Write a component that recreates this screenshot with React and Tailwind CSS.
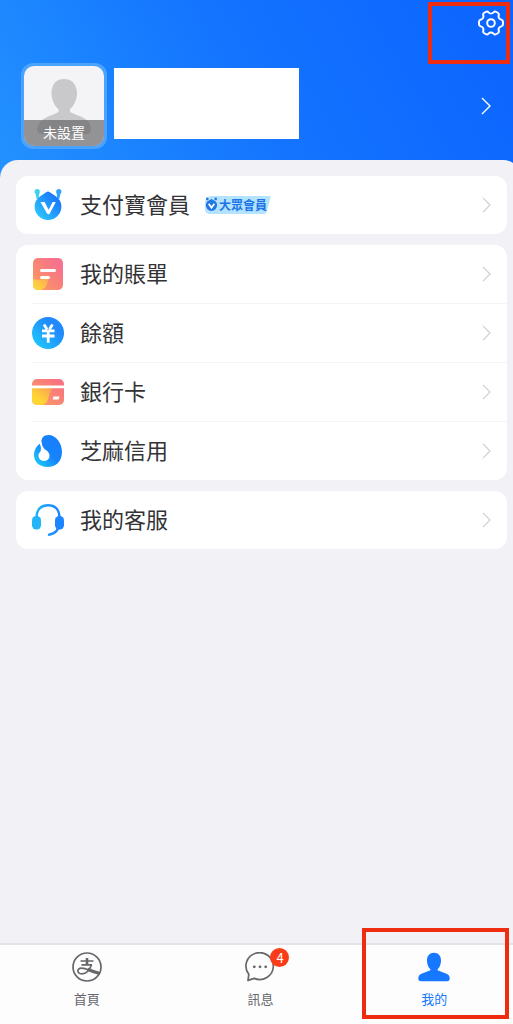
import React from 'react';

const Chevron = ({ className }) => (
  <svg viewBox="0 0 10 18" fill="none" stroke="currentColor" strokeWidth="1.4" className={className} aria-hidden="true">
    <path d="M1 1l8 8-8 8" />
  </svg>
);

const GearIcon = () => (
  <svg viewBox="0 0 28 28" fill="none" stroke="currentColor" strokeWidth="2.1" strokeLinejoin="round" className="size-[26px]" aria-hidden="true">
    <path d="M8.6 1.9C10 1.2 10.6 1.8 11.3 2.6C12.8 4.1 15.2 4.1 16.7 2.6C17.4 1.8 18 1.2 19.4 1.9L21.6 3.2C22.8 4 22.6 4.8 22.3 5.8C21.7 7.9 22.9 9.9 25 10.4C26.1 10.7 26.9 11.1 26.9 12.6V15.4C26.9 16.9 26.1 17.3 25 17.6C22.9 18.1 21.7 20.1 22.3 22.2C22.6 23.2 22.8 24 21.6 24.8L19.4 26.1C18 26.8 17.4 26.2 16.7 25.4C15.2 23.9 12.8 23.9 11.3 25.4C10.6 26.2 10 26.8 8.6 26.1L6.4 24.8C5.2 24 5.4 23.2 5.7 22.2C6.3 20.1 5.1 18.1 3 17.6C1.9 17.3 1.1 16.9 1.1 15.4V12.6C1.1 11.1 1.9 10.7 3 10.4C5.1 9.9 6.3 7.9 5.7 5.8C5.4 4.8 5.2 4 6.4 3.2Z" />
    <circle cx="14" cy="14" r="4.1" />
  </svg>
);

const MemberIcon = () => (
  <svg viewBox="0 0 32 32" className="size-8" aria-hidden="true">
    <defs>
      <linearGradient id="member" x1="1" y1="0" x2="0" y2="1">
        <stop offset="0.25" stopColor="#1c7dff" />
        <stop offset="1" stopColor="#2fd3fb" />
      </linearGradient>
    </defs>
    <circle cx="5.2" cy="2.6" r="2.6" fill="#3fd0f2" />
    <path d="M3.400 4l4-1-.6 6-2 1.500z" fill="#3fd0f2" />
    <circle cx="26.800" cy="2.600" r="2.600" fill="#2fa4fa" />
    <path d="M28.600 4l-4-1 .6 6 2 1.500z" fill="#2fa4fa" />
    <path d="M14.200 3.200Q16 1.700 17.800 3.200L23.800 7.200Q29.400 11.200 29.400 17.600A13.400 13.400 0 0 1 2.600 17.600Q2.600 11.200 8.200 7.200Z" fill="url(#member)" />
    <path d="M8.400 13h4.200l4 7.800 4-7.800h3.200l-6 11.600q-1.200 1.600-2.800 0z" fill="#fff" />
  </svg>
);

const BillIcon = () => (
  <svg viewBox="0 0 32 32" className="size-8" aria-hidden="true">
    <defs>
      <linearGradient id="bill" x1="1" y1="0" x2="0" y2="1">
        <stop offset="0.2" stopColor="#f6728d" />
        <stop offset="1" stopColor="#fd9f57" />
      </linearGradient>
      <linearGradient id="billFold" x1="1" y1="0" x2="0" y2="1">
        <stop offset="0" stopColor="#fda65c" />
        <stop offset="0.7" stopColor="#ffd13e" />
      </linearGradient>
      <clipPath id="billClip">
        <rect x="1" y="0" width="30" height="32" rx="5" />
      </clipPath>
    </defs>
    <g clipPath="url(#billClip)">
      <rect x="1" width="30" height="32" fill="url(#bill)" />
      <path d="M1 21q8 2 15-1Q16.500 30 7 33H0z" fill="url(#billFold)" />
    </g>
    <path d="M9.500 12.500h13M9.500 19.500h7" stroke="#fff" strokeWidth="3" strokeLinecap="round" />
  </svg>
);

const BalanceIcon = () => (
  <svg viewBox="0 0 32 32" className="size-8" aria-hidden="true">
    <defs>
      <linearGradient id="balance" x1="1" y1="0" x2="0" y2="1">
        <stop offset="0.3" stopColor="#2089fb" />
        <stop offset="1" stopColor="#1fd2fc" />
      </linearGradient>
    </defs>
    <circle cx="16" cy="16" r="16" fill="url(#balance)" />
    <path d="M12 7.500l3 4.800M20.500 7.500l-3 4.800M10 13.800h12.500M10 19h12.500M16.200 13v12.800" fill="none" stroke="#fff" strokeWidth="2.800" />
  </svg>
);

const CardIcon = () => (
  <svg viewBox="0 0 32 32" className="size-8" aria-hidden="true">
    <defs>
      <linearGradient id="card" x1="1" y1="0" x2="0" y2="1">
        <stop offset="0.15" stopColor="#f8737f" />
        <stop offset="1" stopColor="#fba263" />
      </linearGradient>
      <linearGradient id="cardShade" x1="1" y1="0" x2="0" y2="1">
        <stop offset="0" stopColor="#fb9c57" />
        <stop offset="0.7" stopColor="#ffd534" />
      </linearGradient>
      <clipPath id="cardClip">
        <rect y="3" width="32" height="26" rx="5" />
      </clipPath>
    </defs>
    <g clipPath="url(#cardClip)">
      <rect y="3" width="32" height="26" fill="url(#card)" />
      <path d="M0 11h21Q17 17 16 23q-1 5-6 6H0z" fill="url(#cardShade)" />
      <path d="M0 9.500h32v2.800H0z" fill="#fff" />
    </g>
    <path d="M21.500 20.500h6l-.8 3h-6z" fill="#fff" />
  </svg>
);

const CreditIcon = () => (
  <svg viewBox="0 0 32 32" className="size-8" aria-hidden="true">
    <defs>
      <linearGradient id="credit" x1="1" y1="0" x2="0" y2="1">
        <stop offset="0" stopColor="#1a7cff" />
        <stop offset="0.5" stopColor="#1583fb" />
        <stop offset="1" stopColor="#1cd8fb" />
      </linearGradient>
    </defs>
    <path d="M9.500 7.500C9 3.500 11.500 0 16.500 0C24 0 30 8 30 17C30 26 24 32 15.500 32C7.500 32 2 27 2 20C2 15 4.500 10.500 8.500 8.500Z" fill="url(#credit)" />
    <path d="M9.800 7Q9.600 11 13 14.500Q18.500 17.500 17.300 22.200A5.600 5.600 0 0 1 6.500 21.500Q6 18.800 8.200 16.800Q10 14 7.600 8.600Z" fill="#fff" />
  </svg>
);

const ServiceIcon = () => (
  <svg viewBox="0 0 32 32" className="size-8" aria-hidden="true">
    <defs>
      <linearGradient id="service" x1="0" y1="0" x2="32" y2="0" gradientUnits="userSpaceOnUse">
        <stop offset="0" stopColor="#22b8f8" />
        <stop offset="1" stopColor="#1a7cff" />
      </linearGradient>
    </defs>
    <path d="M4.600 13.500C4.600 5 9.500 1.300 16 1.300S27.400 5 27.400 13.500V18C27.400 25.500 23.500 29.500 17 30.700" fill="none" stroke="url(#service)" strokeWidth="2.400" strokeLinecap="round" />
    <rect x="0" y="12" width="9" height="13.500" rx="4.200" fill="#22b5fa" />
    <rect x="23" y="12" width="9" height="13.500" rx="4.200" fill="#1d86ff" />
  </svg>
);

const HomeIcon = () => (
  <svg viewBox="0 0 30 30" fill="none" stroke="currentColor" className="size-[30px]" aria-hidden="true">
    <circle cx="15" cy="15" r="14" strokeWidth="1.700" />
    <path d="M15 6v6.500" strokeWidth="2.600" />
    <path d="M8.500 9h13M9.500 12.800h10.500" strokeWidth="1.700" />
    <path d="M19.500 12.800C17.500 18.500 14 21.800 10 21.800C4.800 21.800 4.500 16.200 9.300 16.200C13.500 16.200 17 18.200 20 19.300" strokeWidth="1.700" />
    <path d="M15.500 17.300Q21 19.800 27.800 21.500" strokeWidth="3.200" />
  </svg>
);

const MessageIcon = () => (
  <svg viewBox="0 0 30 30" fill="none" stroke="currentColor" strokeWidth="1.700" strokeLinejoin="round" className="size-[30px]" aria-hidden="true">
    <path d="M3.800 22.300A13.700 13.400 0 1 1 9.200 26.400L3 28.400Z" />
    <g fill="currentColor" stroke="none">
      <circle cx="9.300" cy="14.800" r="1.400" />
      <circle cx="15" cy="14.800" r="1.400" />
      <circle cx="20.700" cy="14.800" r="1.400" />
    </g>
  </svg>
);

const PersonIcon = () => (
  <svg viewBox="0 0 32 30" fill="currentColor" className="h-[30px] w-8" aria-hidden="true">
    <path d="M16 .8C20.500.800 23 4 23 8.500C23 12.500 21.600 15.500 19.600 17.300V18.300L28.500 21.800Q31.700 23.100 31.700 26.500Q31.700 29.200 29 29.200H3Q.3 29.200.3 26.500Q.3 23.100 3.500 21.800L12.400 18.300V17.300C10.400 15.500 9 12.500 9 8.500C9 4 11.500.8 16 .8Z" />
  </svg>
);

const MemberTag = () => (
  <span className="relative flex h-5 items-center pr-1 pl-[15px] text-[12px] leading-5 font-bold text-[#1c74e8]">
    <svg viewBox="0 0 67 20" preserveAspectRatio="none" className="absolute inset-0 h-full w-full" aria-hidden="true">
      <path d="M8 1H65Q67 1 66.500 3L62.500 17Q61.800 19 60 19H6Q1 19 1 13V8Q1 1 8 1Z" fill="#b3e3fd" />
    </svg>
    <svg viewBox="0 0 14 16" className="absolute top-[2px] left-0 size-[15px]" aria-hidden="true">
      <circle cx="2.500" cy="2" r="1.400" fill="#2277e6" />
      <circle cx="11.500" cy="2" r="1.400" fill="#2277e6" />
      <path d="M7 2l4.200 2.600a6 6 0 1 1-8.400 0z" fill="#2277e6" />
      <path d="M4 7.200L7 11.500l3-4.300" fill="none" stroke="#fff" strokeWidth="1.800" />
    </svg>
    <span className="relative">大眾會員</span>
  </span>
);

const menuGroups = [
  [{ label: '支付寶會員', icon: MemberIcon, tag: true }],
  [
    { label: '我的賬單', icon: BillIcon },
    { label: '餘額', icon: BalanceIcon },
    { label: '銀行卡', icon: CardIcon },
    { label: '芝麻信用', icon: CreditIcon },
  ],
  [{ label: '我的客服', icon: ServiceIcon }],
];

const tabs = [
  { label: '首頁', icon: HomeIcon },
  { label: '訊息', icon: MessageIcon, badge: 4 },
  { label: '我的', icon: PersonIcon, active: true },
];

const MenuRow = ({ item, divided }) => {
  const Icon = item.icon;
  return (
    <li className="pl-4">
      <div className={divided ? 'border-t border-[#f4f4f6]' : ''}>
        <a href="#" className="flex h-[58px] items-center pr-4">
          <Icon />
          <span className="ml-4 pb-1 text-[22px] leading-8 text-[#333336]">{item.label}</span>
          {item.tag && <span className="ml-[14px]"><MemberTag /></span>}
          <Chevron className="ml-auto h-4 w-[9px] text-[#cfcfd4]" />
        </a>
      </div>
    </li>
  );
};

// Red frame that points the reader to a control
const Highlight = ({ className }) => (
  <span className={`pointer-events-none absolute border-4 border-[#ee2c10] ${className}`} />
);

const Header = () => (
  <header className="bg-linear-60 from-[#2492ff] via-[#1473ff] to-[#0c64ff] pb-7">
    <div className="relative flex justify-end pt-[10px] pr-[9px]">
      <button type="button" aria-label="設置" className="text-white">
        <GearIcon />
      </button>
      <Highlight className="top-[2px] right-[3px] h-[62px] w-[82px]" />
    </div>
    <a href="#" aria-label="個人資料" className="mt-[27px] flex items-center pr-[22px] pl-[21px]">
      <span className="rounded-xl bg-[#4ba3ff] p-[3px]">
        <span className="relative block size-20 overflow-hidden rounded-[10px] bg-[#f4f4f6]">
          <svg viewBox="0 0 80 80" fill="#c9c9cc" className="size-20" aria-hidden="true">
            <path d="M40 13C48.500 13 53 19 53 27.500C53 34 49.500 40.500 46 43V46Q52 49 57 50.500Q67 55 67 63Q67 68 62 68H19Q13 68 13 63Q14 55 24 50.500Q30 48.500 34.500 46V43C31 40.500 27.500 34 27.500 27.500C27.500 19 31.500 13 40 13Z" />
          </svg>
          <span className="absolute inset-x-0 bottom-0 bg-[#605e60]/65 pt-px pb-[2px] text-center text-[14px] leading-[23px] text-white">
            未設置
          </span>
        </span>
      </span>
      <span className="mt-[5px] ml-[7px] h-[71px] w-[185px] self-start bg-white" />
      <Chevron className="ml-auto h-[18px] w-[10px] text-white" />
    </a>
  </header>
);

const TabBar = () => (
  <nav className="-mr-2 grid h-[81px] grid-cols-3 border-t-2 border-[#e3e3e9] bg-[#fdfdfe]">
    {tabs.map((tab) => {
      const Icon = tab.icon;
      return (
        <a
          key={tab.label}
          href="#"
          className={`relative flex flex-col items-center pt-[7px] ${tab.active ? 'text-[#1677ff]' : 'text-[#66666b]'}`}
        >
          <span className="relative">
            <Icon />
            {tab.badge && (
              <span className="absolute -top-1 left-[25px] flex size-[19px] items-center justify-center rounded-full bg-[#fb3c18] text-[13px] leading-none text-white">
                {tab.badge}
              </span>
            )}
          </span>
          <span className="mt-[7px] text-[13px] leading-5">{tab.label}</span>
          {tab.active && <Highlight className="-top-[17px] right-3 left-[15px] h-[91px]" />}
        </a>
      );
    })}
  </nav>
);

export default function App() {
  return (
    <div className="flex min-h-screen flex-col overflow-hidden bg-[#f1f1f6] font-['Noto_Sans_CJK_TC','Noto_Sans',sans-serif]">
      <Header />
      <main className="relative -mt-[17px] -mr-2 flex flex-1 flex-col gap-[11px] rounded-t-[18px] bg-[#f1f1f6] pt-4 pr-[14px] pl-4">
        {menuGroups.map((group, i) => (
          <ul key={i} className="overflow-hidden rounded-xl bg-white">
            {group.map((item, j) => (
              <MenuRow key={item.label} item={item} divided={j > 0} />
            ))}
          </ul>
        ))}
      </main>
      <TabBar />
    </div>
  );
}
